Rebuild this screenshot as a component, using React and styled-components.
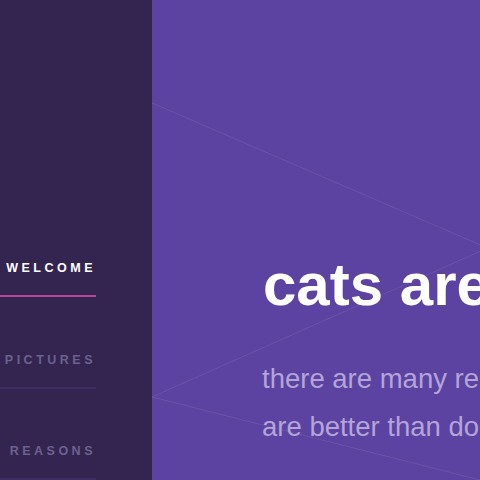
import * as React from 'react';
import styled, { createGlobalStyle } from 'styled-components';

const GlobalStyle = createGlobalStyle`
  html, body {
    margin: 0;
    padding: 0;
    width: 480px;
    height: 480px;
    overflow: hidden;
    font-family: "Liberation Sans", Arial, sans-serif;
  }
`;

const Page = styled.div`
  display: flex;
  width: 480px;
  height: 480px;
  overflow: hidden;
`;

const Sidebar = styled.div`
  flex: 0 0 152px;
  height: 100%;
  background-color: #33254f;
  padding-top: 205.5px;
  box-sizing: border-box;
`;

const Nav = styled.nav`
  width: 96px;
  display: flex;
  flex-direction: column;
`;

const NavItem = styled.a`
  display: block;
  padding: 55.5px 0 20px;
  line-height: 14px;
  font-size: 12.5px;
  font-weight: 700;
  letter-spacing: 3.5px;
  text-transform: uppercase;
  text-align: right;
  text-decoration: none;
  white-space: nowrap;
  color: ${(props) => (props.$active ? '#ffffff' : '#6d6190')};
  border-bottom: 2px solid ${(props) => (props.$active ? '#b8459c' : '#3e2c63')};
`;

const Main = styled.main`
  position: relative;
  flex: 1 1 0;
  min-width: 0;
  height: 100%;
  background-color: #5c42a1;
  padding: 250px 0 0 111px;
  box-sizing: border-box;
  overflow: hidden;
`;

const Pattern = styled.svg`
  position: absolute;
  left: 0;
  top: 0;
  width: 328px;
  height: 480px;
  pointer-events: none;
`;

const Content = styled.div`
  position: relative;
`;

const Title = styled.h1`
  margin: 0;
  font-size: 60px;
  line-height: 70px;
  font-weight: 700;
  color: #ffffff;
  white-space: nowrap;
`;

const Lead = styled.p`
  margin: 35px 0 0 -1px;
  width: 420px;
  font-size: 27.5px;
  line-height: 48px;
  color: #b3a4d9;
`;

const links = ['welcome', 'pictures', 'reasons'];

export default function App() {
  const [current, setCurrent] = React.useState(0);

  return (
    <Page>
      <GlobalStyle />
      <Sidebar>
        <Nav>
          {links.map((link, index) => (
            <NavItem key={link} href="#" $active={index === current} onClick={() => setCurrent(index)}>
              {link}
            </NavItem>
          ))}
        </Nav>
      </Sidebar>
      <Main>
        <Pattern viewBox="0 0 328 480">
          <g stroke="#ffffff" strokeOpacity="0.09" strokeWidth="1" fill="none">
            <path d="M0 103 L340 250" />
            <path d="M0 397 L340 246" />
            <path d="M0 397 L340 483" />
          </g>
        </Pattern>
        <Content>
          <Title>cats are awesome</Title>
          <Lead>there are many reasons why cats are better than dogs.</Lead>
        </Content>
      </Main>
    </Page>
  );
}
